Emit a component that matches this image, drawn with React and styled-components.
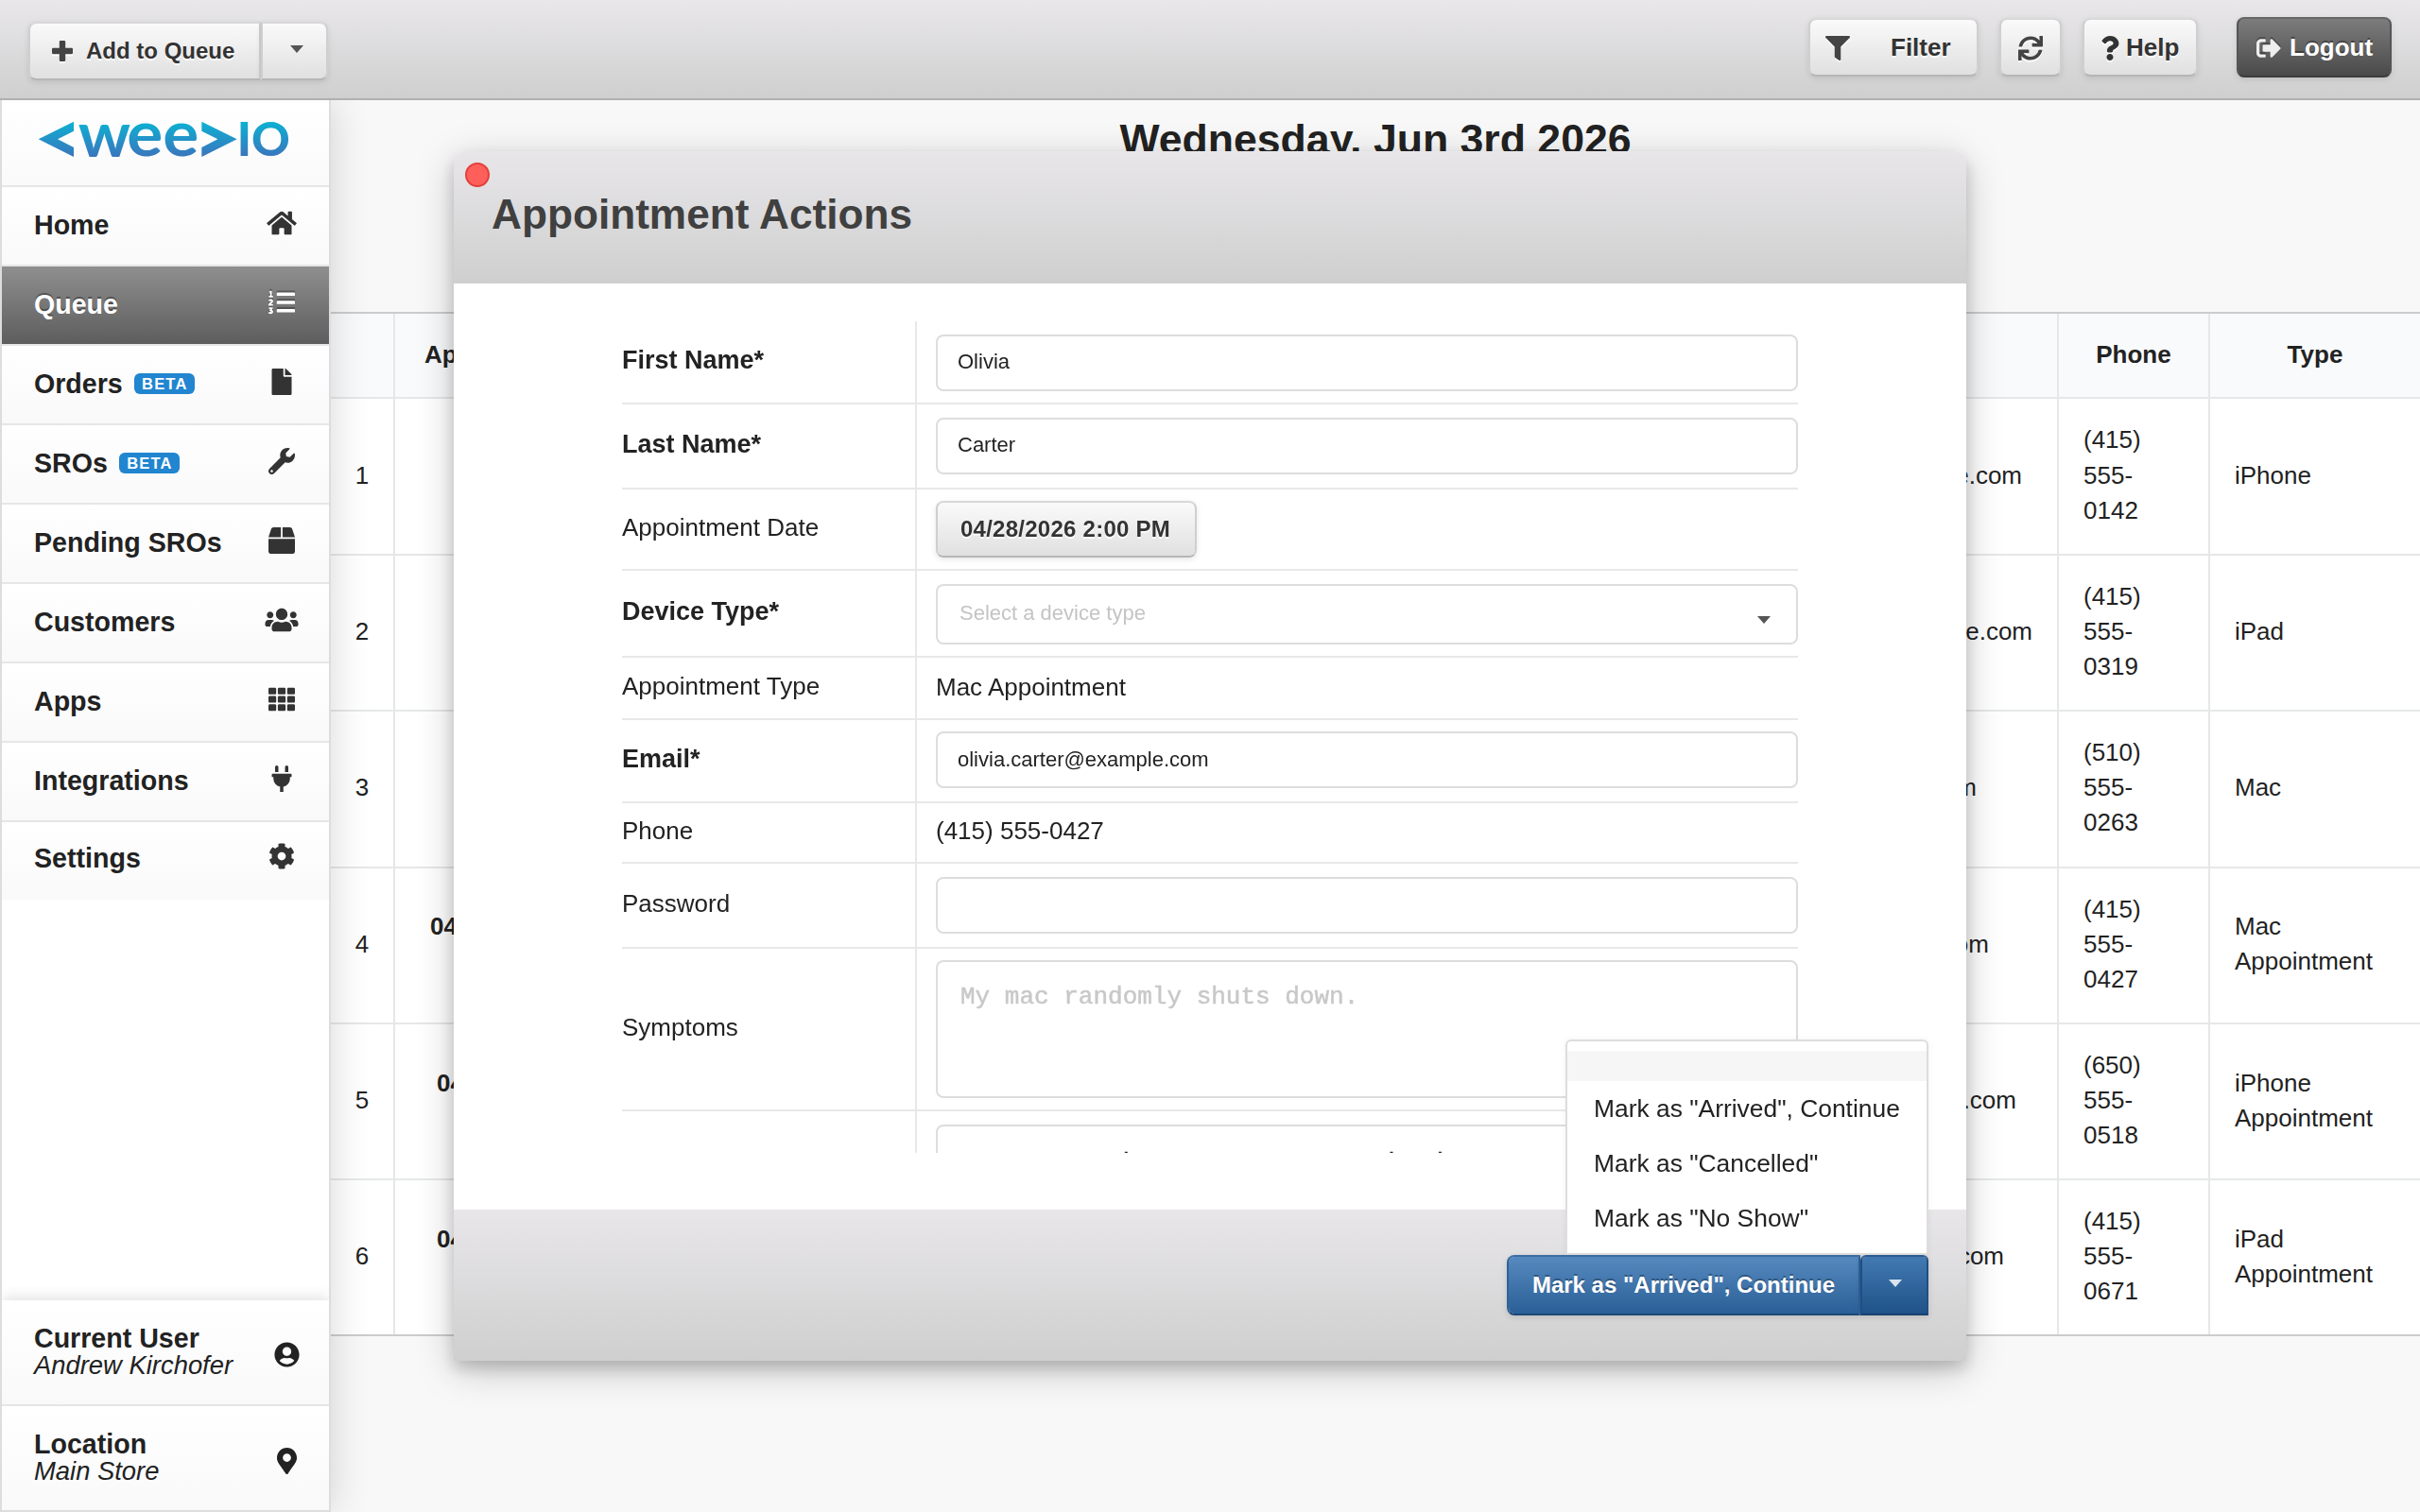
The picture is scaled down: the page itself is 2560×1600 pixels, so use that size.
import React from 'react'
import styled, {createGlobalStyle} from 'styled-components'
import {
  FaFilter, FaSync, FaQuestion, FaSignOutAlt, FaHome, FaListOl, FaFile, FaWrench,
  FaBox, FaUsers, FaTh, FaPlug, FaCog, FaUserCircle, FaMapMarkerAlt
} from 'react-icons/fa'

const navItems = [
  {label: 'Home', icon: FaHome},
  {label: 'Queue', icon: FaListOl, active: true},
  {label: 'Orders', icon: FaFile, beta: true},
  {label: 'SROs', icon: FaWrench, beta: true},
  {label: 'Pending SROs', icon: FaBox},
  {label: 'Customers', icon: FaUsers},
  {label: 'Apps', icon: FaTh},
  {label: 'Integrations', icon: FaPlug},
  {label: 'Settings', icon: FaCog}
]

// end = space between the email text and the phone column
const queue = [
  {id: 1, email: 'maya@example.com', end: 37, phone: '(415) 555-0142', type: 'iPhone'},
  {id: 2, email: 'daniel@example.com', end: 26, phone: '(415) 555-0319', type: 'iPad'},
  {id: 3, email: 'priya@example.com', end: 85, phone: '(510) 555-0263', type: 'Mac'},
  {id: 4, time: '04/28/2026', indent: 37, email: 'olivia.carter@example.com', end: 72, phone: '(415) 555-0427', type: 'Mac Appointment'},
  {id: 5, time: '04/28/2026', indent: 44, email: 'noah@example.com', end: 43, phone: '(650) 555-0518', type: 'iPhone Appointment'},
  {id: 6, time: '04/28/2026', indent: 44, email: 'emma@example.com', end: 56, phone: '(415) 555-0671', type: 'iPad Appointment'}
]

function Logo() {
  return (
    <svg width="300" height="80" viewBox="0 0 900 240">
      <defs>
        <linearGradient id="logoFill" gradientUnits="userSpaceOnUse" x1="0" y1="58" x2="0" y2="170">
          <stop offset="0" stopColor="#0db0d2" />
          <stop offset="1" stopColor="#3b74bc" />
        </linearGradient>
      </defs>
      <g fill="url(#logoFill)" fontFamily="Lato, sans-serif" fontWeight="700">
        <polygon points="32,112 144,56 144,86 93,112 144,138 144,168" />
        <text x="158" y="167" fontSize="202" textLength="166" lengthAdjust="spacingAndGlyphs">w</text>
        <text x="313" y="164" fontSize="198" textLength="228" lengthAdjust="spacingAndGlyphs">ee</text>
        <polygon points="550,56 662,112 550,168 550,138 601,112 550,86" />
        <text x="662" y="165" fontSize="146" fontWeight="900" textLength="168" lengthAdjust="spacingAndGlyphs">IO</text>
      </g>
    </svg>
  )
}

function PlusIcon() {
  return (
    <svg width="22" height="22" viewBox="0 0 22 22">
      <path
        fill="currentColor"
        d="M9 0h4a1.200 1.200 0 0 1 1.200 1.200V7.800h6.600A1.200 1.200 0 0 1 22 9v4a1.200 1.200 0 0 1-1.200 1.200H14.200v6.600A1.200 1.200 0 0 1 13 22H9a1.200 1.200 0 0 1-1.200-1.200V14.200H1.200A1.200 1.200 0 0 1 0 13V9a1.200 1.200 0 0 1 1.200-1.200H7.800V1.200A1.200 1.200 0 0 1 9 0z"
      />
    </svg>
  )
}

function Field({label, required, height, top, children}) {
  return (
    <FieldRow $height={height}>
      <FieldLabel $required={required}>{label}{required && '*'}</FieldLabel>
      <FieldValue $top={top}>{children}</FieldValue>
    </FieldRow>
  )
}

export default function App() {
  return (
    <Page>
      <GlobalStyle />
      <TopBar>
        <ButtonGroup>
          <Button $joined $pad={23} $gap={14} $width={246}><PlusIcon />Add to Queue</Button>
          <SplitButton><Caret /></SplitButton>
        </ButtonGroup>
        <TopActions>
          <Button $large $pad={16} $gap={43} $width={180}><FaFilter size={26} />Filter</Button>
          <Button $large $pad={18} $width={66}><FaSync size={26} /></Button>
          <HelpButton $large $pad={17} $gap={7} $width={122}><FaQuestion size={26} />Help</HelpButton>
          <DarkButton><FaSignOutAlt size={26} />Logout</DarkButton>
        </TopActions>
      </TopBar>

      <Content>
        <Sidebar>
          <Brand><Logo /></Brand>
          {navItems.map(({label, icon: Icon, active, beta}) => (
            <NavItem key={label} $active={active}>
              <span>{label}</span>
              {beta && <Badge>BETA</Badge>}
              <NavIcon><Icon size={28} /></NavIcon>
            </NavItem>
          ))}
          <SideFooter>
            <FooterItem>
              <div>
                <FooterTitle>Current User</FooterTitle>
                <FooterText>Andrew Kirchofer</FooterText>
              </div>
              <FooterIcon><FaUserCircle size={27} /></FooterIcon>
            </FooterItem>
            <FooterItem>
              <div>
                <FooterTitle>Location</FooterTitle>
                <FooterText>Main Store</FooterText>
              </div>
              <FooterIcon><FaMapMarkerAlt size={28} /></FooterIcon>
            </FooterItem>
          </SideFooter>
        </Sidebar>

        <Main>
          <DateTitle>Wednesday, Jun 3rd 2026</DateTitle>
          <Table>
            <HeadRow>
              <HeadCell />
              <HeadCell $indent={31}>Appointment</HeadCell>
              <HeadCell />
              <HeadCell $center>Phone</HeadCell>
              <HeadCell $center>Type</HeadCell>
            </HeadRow>
            {queue.map(row => (
              <Row key={row.id}>
                <NumberCell>{row.id}</NumberCell>
                <TimeCell $indent={row.indent}>{row.time && <>{row.time}<br />&nbsp;</>}</TimeCell>
                <EmailCell $end={row.end}>{row.email}</EmailCell>
                <PhoneCell>{row.phone}</PhoneCell>
                <TypeCell>{row.type}</TypeCell>
              </Row>
            ))}
          </Table>
        </Main>
      </Content>

      <Overlay>
        <Modal>
          <ModalHeader>
            <CloseDot />
            <ModalTitle>Appointment Actions</ModalTitle>
          </ModalHeader>
          <ModalBody>
            <Form>
              <Field label="First Name" required height={88} top={14}><Input>Olivia</Input></Field>
              <Field label="Last Name" required height={90} top={14}><Input>Carter</Input></Field>
              <Field label="Appointment Date" height={86} top={12}>
                <Button $pad={24} $height={60} $width={276} $spacing={0.25}>04/28/2026 2:00 PM</Button>
              </Field>
              <Field label="Device Type" required height={92} top={14}>
                <Select>Select a device type<Caret /></Select>
              </Field>
              <Field label="Appointment Type" height={66} top={13}>Mac Appointment</Field>
              <Field label="Email" required height={88} top={12}><Input $drop={1}>olivia.carter@example.com</Input></Field>
              <Field label="Phone" height={64} top={11}>(415) 555-0427</Field>
              <Field label="Password" height={90} top={14}><Input /></Field>
              <Field label="Symptoms" height={172} top={12}>
                <TextArea $empty>My mac randomly shuts down.</TextArea>
              </Field>
              <Field label="" height={172} top={14}>
                <TextArea>Screen was bent near corners having</TextArea>
              </Field>
            </Form>
          </ModalBody>
          <ModalFooter>
            <ActionGroup>
              <Menu>
                <MenuDivider />
                <MenuItem>Mark as "Arrived", Continue</MenuItem>
                <MenuItem>Mark as "Cancelled"</MenuItem>
                <MenuItem>Mark as "No Show"</MenuItem>
              </Menu>
              <PrimaryButton>Mark as "Arrived", Continue</PrimaryButton>
              <PrimarySplit><Caret $light /></PrimarySplit>
            </ActionGroup>
          </ModalFooter>
        </Modal>
      </Overlay>
    </Page>
  )
}

const GlobalStyle = createGlobalStyle`
* {
  box-sizing: border-box;
}
body {
  margin: 0;
  font-family: "Liberation Sans", Arial, sans-serif;
  font-size: 26px;
  color: #222;
  background: #f8f8f8;
}
svg {
  display: block;
  flex-shrink: 0;
}
`

const Page = styled.div`
  display: flex;
  flex-direction: column;
  height: 1600px;
  overflow: hidden;
`

const TopBar = styled.header`
  position: relative;
  z-index: 2;
  display: flex;
  justify-content: space-between;
  height: 106px;
  padding: 18px 30px 0;
  background: linear-gradient(#e9e7ea, #cfcfcf);
  border-bottom: 2px solid #b0b0b0;
`

const ButtonGroup = styled.div`
  display: flex;
  padding-top: 5px;
`

const TopActions = styled.div`
  display: flex;
  gap: 22px;
`

const Button = styled.button`
  display: inline-flex;
  align-items: center;
  gap: ${props => props.$gap || 14}px;
  width: ${props => props.$width}px;
  height: ${props => props.$height || 62}px;
  margin-top: ${props => props.$large ? 1 : 0}px;
  padding: ${props => props.$large ? 1 : 0}px 0 0 ${props => props.$pad}px;
  font-family: inherit;
  font-size: ${props => props.$large ? 26 : 24}px;
  font-weight: bold;
  letter-spacing: ${props => props.$spacing || 0}px;
  white-space: nowrap;
  color: #333;
  text-shadow: 0 2px 0 rgba(255, 255, 255, .9);
  background: linear-gradient(#fafafa, #e0e0e0) padding-box;
  border: 2px solid #cfcfcf;
  border-top-color: #d8d8d8;
  border-bottom-color: #b6b6b6;
  border-radius: ${props => props.$joined ? '8px 0 0 8px' : '8px'};
  box-shadow: 0 2px 6px rgba(0, 0, 0, .1);
  svg {
    color: #444;
    filter: drop-shadow(0 2px 0 rgba(255, 255, 255, .9));
  }
`

const HelpButton = styled(Button)`
  svg {
    width: 20px;
    color: #333;
  }
`

const SplitButton = styled(Button)`
  justify-content: center;
  width: 71px;
  padding: 0 0 0 4px;
  border-radius: 0 8px 8px 0;
`

const DarkButton = styled(Button)`
  gap: 9px;
  width: 164px;
  height: 64px;
  margin-left: 19px;
  padding: 1px 0 0 19px;
  font-size: 26px;
  color: #fff;
  text-shadow: 0 -2px 0 rgba(0, 0, 0, .35);
  background: linear-gradient(#7c7c7c, #4a4a4a);
  border-color: #666 #555 #3c3c3c;
  svg {
    color: #eee;
    filter: drop-shadow(0 -2px 0 rgba(0, 0, 0, .3));
  }
`

const Caret = styled.span`
  width: 0;
  height: 0;
  border: 7px solid transparent;
  border-top: 8px solid ${props => props.$light ? '#d8e4f0' : '#555'};
  border-bottom: 0;
  margin-bottom: 4px;
`

const Content = styled.div`
  display: flex;
  flex: 1;
`

const Sidebar = styled.aside`
  position: relative;
  z-index: 1;
  display: flex;
  flex-direction: column;
  width: 350px;
  background: #fff;
  border: 2px solid #ddd;
  border-top: 0;
  box-shadow: 0 0 40px rgba(0, 0, 0, .16);
`

const Brand = styled.div`
  height: 92px;
  padding: 4px 0 0 28px;
  background: linear-gradient(#fff, #fafafa);
  border-bottom: 2px solid #e6e6e6;
`

const NavItem = styled.a`
  display: flex;
  align-items: center;
  height: 84px;
  padding: 0 32px 2px 34px;
  font-size: 28.6px;
  font-weight: bold;
  color: ${props => props.$active ? '#fff' : '#222'};
  text-shadow: ${props => props.$active ? '0 -2px 0 rgba(0, 0, 0, .35)' : 'none'};
  background: ${props => props.$active ? 'linear-gradient(#8f8f8f, #5d5d5d)' : 'linear-gradient(#fff, #f9f9f9)'};
  border-bottom: 2px solid #e6e6e6;
  svg {
    width: 36px;
    color: ${props => props.$active ? '#fff' : '#333'};
    filter: ${props => props.$active ? 'drop-shadow(0 -2px 0 rgba(0, 0, 0, .3))' : 'none'};
  }
  &:nth-last-child(2) {
    height: 82px;
    padding-bottom: 5px;
    border-bottom: 0;
  }
`

const Badge = styled.span`
  width: 64px;
  height: 22px;
  margin-left: 12px;
  padding-left: 1px;
  font-size: 16.5px;
  line-height: 22px;
  letter-spacing: 1.2px;
  text-align: center;
  color: #fff;
  background: #2185d0;
  border-radius: 6px;
`

const NavIcon = styled.span`
  width: 36px;
  margin-left: auto;
  padding-bottom: 5px;
`

const SideFooter = styled.div`
  margin-top: auto;
  box-shadow: 0 -3px 14px rgba(0, 0, 0, .12);
  clip-path: inset(-20px 0 0 0);
`

const FooterItem = styled.div`
  display: flex;
  align-items: center;
  justify-content: space-between;
  height: 110px;
  padding: 0 31px 2px 34px;
  color: #222;
  background: linear-gradient(#fff, #f9f9f9);
  & + & {
    height: 112px;
    border-top: 2px solid #e6e6e6;
  }
`

const FooterTitle = styled.div`
  font-size: 28.6px;
  line-height: 30px;
  font-weight: bold;
`

const FooterText = styled.div`
  font-size: 27.4px;
  line-height: 28px;
  font-style: italic;
`

const FooterIcon = styled.span`
  padding-top: 7px;
  svg {
    width: 27px;
  }
`

const Main = styled.main`
  flex: 1;
  padding-top: 12px;
`

const DateTitle = styled.h1`
  height: 212px;
  margin: 0;
  font-size: 44.6px;
  line-height: 60px;
  text-align: center;
`

const Table = styled.div`
  background: #fff;
  border-top: 2px solid #ccc;
  border-bottom: 2px solid #ccc;
`

const Row = styled.div`
  display: grid;
  grid-template-columns: 68px 300px 1460px 160px 1fr;
  height: 165.4px;
  line-height: 37.14px;
  border-bottom: 2px solid #e6e7e8;
  &:last-child {
    height: 163px;
    border-bottom: 0;
  }
`

const HeadRow = styled(Row)`
  height: 90.4px;
  background: #f9fafc;
`

const Cell = styled.div`
  display: flex;
  align-items: center;
  padding-bottom: 2px;
  border-right: 2px solid #e6e7e8;
  &:last-child {
    border-right: 0;
  }
`

const HeadCell = styled(Cell)`
  justify-content: ${props => props.$center ? 'center' : 'flex-start'};
  padding: 0 0 1px ${props => props.$indent || 0}px;
  font-weight: bold;
`

const NumberCell = styled(Cell)`
  justify-content: center;
`

const TimeCell = styled(Cell)`
  padding-left: ${props => props.$indent || 0}px;
  font-weight: bold;
`

const EmailCell = styled(Cell)`
  justify-content: flex-end;
  padding-right: ${props => props.$end}px;
`

const PhoneCell = styled(Cell)`
  padding: 0 60px 2px 26px;
`

const TypeCell = styled(Cell)`
  padding: 0 50px 2px 26px;
`

const Overlay = styled.div`
  position: fixed;
  inset: 0;
  z-index: 3;
  display: flex;
  justify-content: center;
  align-items: flex-start;
  padding-top: 160px;
`

const Modal = styled.div`
  display: flex;
  flex-direction: column;
  width: 1600px;
  height: 1280px;
  background: #fff;
  border-radius: 12px 12px 0 0;
  box-shadow: 0 10px 40px rgba(0, 0, 0, .22), 0 8px 16px rgba(0, 0, 0, .16);
`

const ModalHeader = styled.div`
  height: 140px;
  padding: 12px 0 0 12px;
  background: linear-gradient(#e8e6e9, #cfcfcf);
  border-radius: 12px 12px 0 0;
`

const CloseDot = styled.div`
  width: 26px;
  height: 26px;
  background: #ff5f5a;
  border: 2px solid #e2403b;
  border-radius: 50%;
`

const ModalTitle = styled.h2`
  margin: 4px 0 0 28px;
  font-size: 44.2px;
  line-height: 50px;
  color: #404040;
`

const ModalBody = styled.div`
  height: 980px;
  padding: 40px 178px 60px;
`

const Form = styled.div`
  height: 880px;
  overflow: hidden;
`

const FieldRow = styled.div`
  display: grid;
  grid-template-columns: 312px 1fr;
  height: ${props => props.$height}px;
  border-bottom: 2px solid #e8e8e8;
`

const FieldLabel = styled.div`
  display: flex;
  align-items: center;
  padding-bottom: 3px;
  font-size: ${props => props.$required ? 27 : 26}px;
  font-weight: ${props => props.$required ? 'bold' : 'normal'};
  border-right: 2px solid #e8e8e8;
`

const FieldValue = styled.div`
  padding: ${props => props.$top}px 0 0 20px;
  line-height: 36px;
`

const Input = styled.div`
  height: 60px;
  padding: ${props => props.$drop || 0}px 21px 0;
  font-size: 22px;
  line-height: 54px;
  background: #fff;
  border: 2px solid #ddd;
  border-radius: 8px;
`

const Select = styled(Input)`
  display: flex;
  align-items: center;
  justify-content: space-between;
  height: 64px;
  padding: 0 27px 2px 23px;
  color: #c4c4c4;
  ${Caret} {
    margin: 14px 0 0;
  }
`

const TextArea = styled.div`
  height: 146px;
  padding: ${props => props.$empty ? 20 : 22}px 24px;
  font-family: "Liberation Mono", monospace;
  font-size: 26px;
  line-height: 34px;
  color: ${props => props.$empty ? '#c8c8c8' : '#222'};
  -webkit-text-stroke: .5px;
  border: 2px solid #ddd;
  border-radius: 8px;
`

const ModalFooter = styled.div`
  display: flex;
  justify-content: flex-end;
  height: 160px;
  padding: 48px 40px 0;
  background: linear-gradient(#e8e6e9, #cfcfcf);
`

const ActionGroup = styled.div`
  position: relative;
  display: flex;
  height: 64px;
`

const PrimaryButton = styled.button`
  width: 374px;
  padding: 0;
  font-family: inherit;
  font-size: 24px;
  font-weight: bold;
  color: #fff;
  text-shadow: 0 -2px 0 rgba(0, 0, 0, .3);
  background: linear-gradient(#568abf, #2a5f97) padding-box;
  border: 2px solid #2f6299;
  border-top-color: #3c6ea5;
  border-bottom-color: #1c4877;
  border-radius: 8px 0 0 8px;
  box-shadow: 0 2px 6px rgba(0, 0, 0, .12);
`

const PrimarySplit = styled(PrimaryButton)`
  display: flex;
  align-items: center;
  justify-content: center;
  width: 72px;
  padding-left: 2px;
  background: linear-gradient(#437ab2, #1e5288) padding-box;
  border-color: #2c5f96 #1f4f83 #184371;
  border-radius: 6px 6px 0 0;
`

const Menu = styled.div`
  position: absolute;
  right: 0;
  bottom: 64px;
  width: 384px;
  height: 228px;
  padding-top: 10px;
  background: #fff;
  border: 2px solid #ddd;
  border-radius: 6px 6px 0 0;
  box-shadow: 0 0 6px rgba(0, 0, 0, .06);
`

const MenuDivider = styled.div`
  height: 32px;
  background: #f6f6f6;
`

const MenuItem = styled.div`
  height: 58px;
  padding-left: 28px;
  font-size: 26.4px;
  line-height: 58px;
  white-space: nowrap;
`
